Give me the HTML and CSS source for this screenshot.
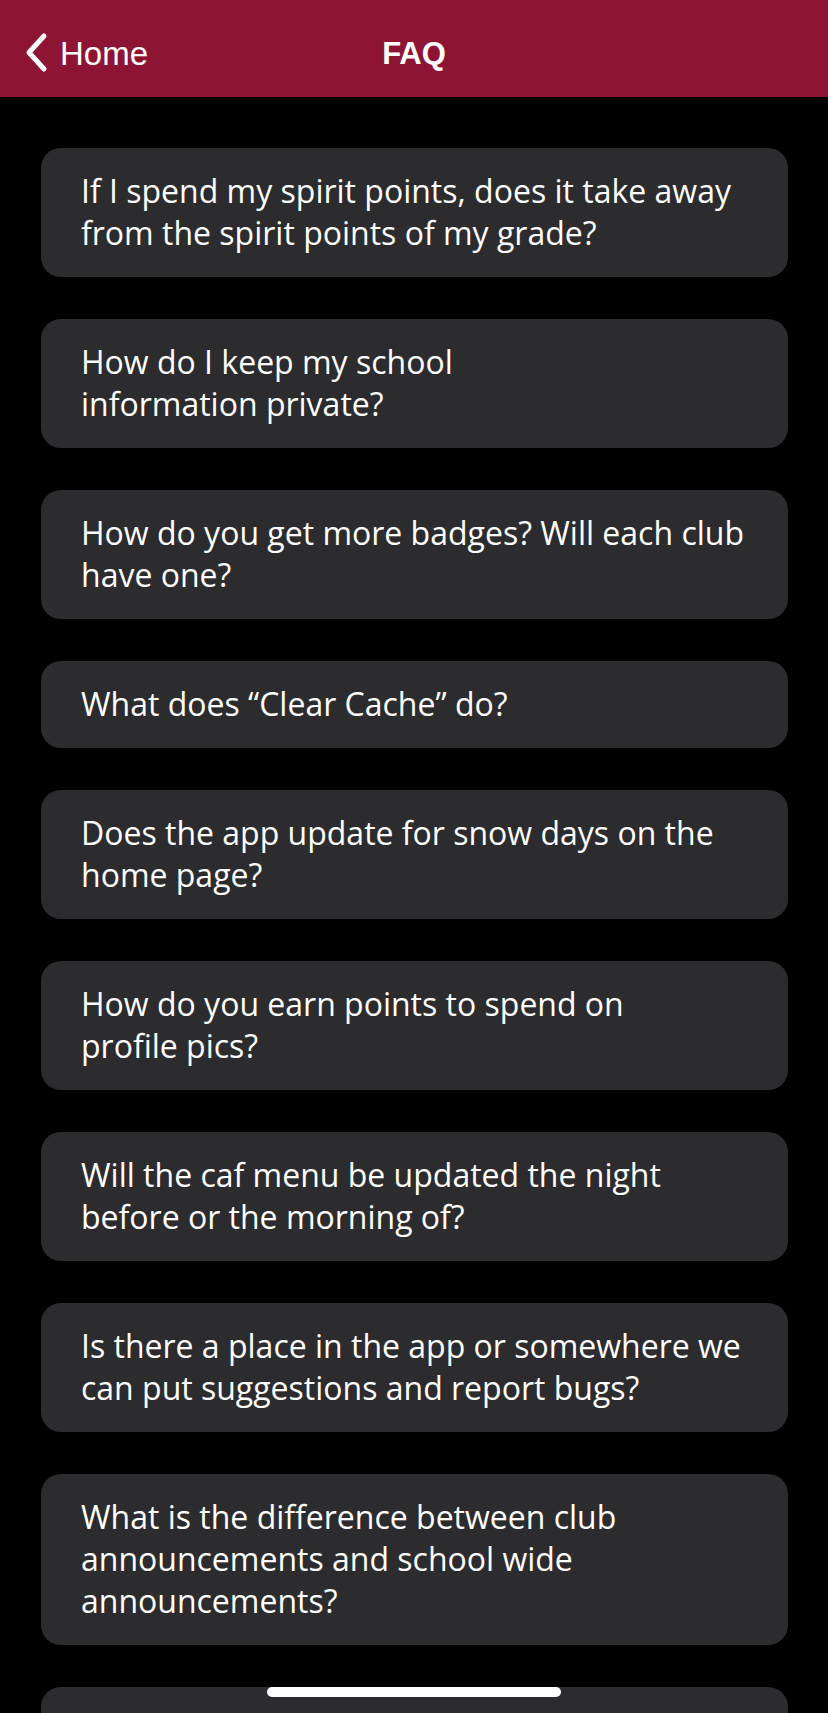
FILE: index.html
```html
<!DOCTYPE html>
<html lang="en">
<head>
<meta charset="utf-8">
<title>FAQ</title>
<link rel="stylesheet" href="styles.css">
</head>
<body>
<header class="nav">
  <a class="nav-back" href="#">
    <svg class="nav-chevron" width="26" height="44" viewBox="0 0 26 44" aria-hidden="true">
      <path d="M20 4 L5 20.5 L20 37" fill="none" stroke="#ffffff" stroke-width="5" stroke-linecap="round" stroke-linejoin="round"/>
    </svg>
    <span class="nav-back-label">Home</span>
  </a>
  <h1 class="nav-title">FAQ</h1>
  <span class="nav-spacer"></span>
</header>

<main class="faq-list">
  <div class="faq-card"><p class="faq-q">If I spend my spirit points, does it take away<br>from the spirit points of my grade?</p></div>
  <div class="faq-card"><p class="faq-q">How do I keep my school<br>information private?</p></div>
  <div class="faq-card"><p class="faq-q">How do you get more badges? Will each club<br>have one?</p></div>
  <div class="faq-card"><p class="faq-q">What does “Clear Cache” do?</p></div>
  <div class="faq-card"><p class="faq-q">Does the app update for snow days on the<br>home page?</p></div>
  <div class="faq-card"><p class="faq-q">How do you earn points to spend on<br>profile pics?</p></div>
  <div class="faq-card"><p class="faq-q">Will the caf menu be updated the night<br>before or the morning of?</p></div>
  <div class="faq-card"><p class="faq-q">Is there a place in the app or somewhere we<br>can put suggestions and report bugs?</p></div>
  <div class="faq-card"><p class="faq-q">What is the difference between club<br>announcements and school wide<br>announcements?</p></div>
  <div class="faq-card faq-card--peek"></div>
</main>

<div class="home-indicator"></div>
</body>
</html>
```
FILE: styles.css
```css
* { box-sizing: border-box; }

html, body {
  margin: 0;
  padding: 0;
  background: #000000;
}

body {
  font-family: "Open Sans", "Noto Sans", sans-serif;
  color: #ffffff;
}

/* Navigation bar */
.nav {
  display: grid;
  grid-template-columns: 1fr auto 1fr;
  align-items: center;
  height: 97px;
  padding: 11px 24px 0 24px;
  background: #8d1433;
  font-family: "Liberation Sans", Arial, sans-serif;
  font-size: 33px;
  line-height: 32px;
  color: #ffffff;
}

.nav-back {
  display: flex;
  align-items: center;
  gap: 10px;
  color: #ffffff;
  text-decoration: none;
  justify-self: start;
}

.nav-chevron {
  display: block;
  flex: none;
}

.nav-back-label {
  display: block;
}

.nav-title {
  margin: 0;
  font-size: 31px;
  line-height: 32px;
  font-weight: 700;
  text-align: center;
}

/* FAQ list */
.faq-list {
  display: flex;
  flex-direction: column;
  gap: 42px;
  padding: 51px 40px 40px 41px;
}

.faq-card {
  background: #2c2c2e;
  border-radius: 20px;
  padding: 22px 40px 23px 40px;
}

.faq-card--peek {
  min-height: 88px;
}

.faq-q {
  margin: 0;
  font-size: 32px;
  line-height: 42px;
  white-space: nowrap;
  color: #ffffff;
}

/* iOS home indicator overlay */
.home-indicator {
  position: fixed;
  left: 267px;
  top: 1687px;
  width: 294px;
  height: 10px;
  border-radius: 5px;
  background: #ffffff;
}
```
